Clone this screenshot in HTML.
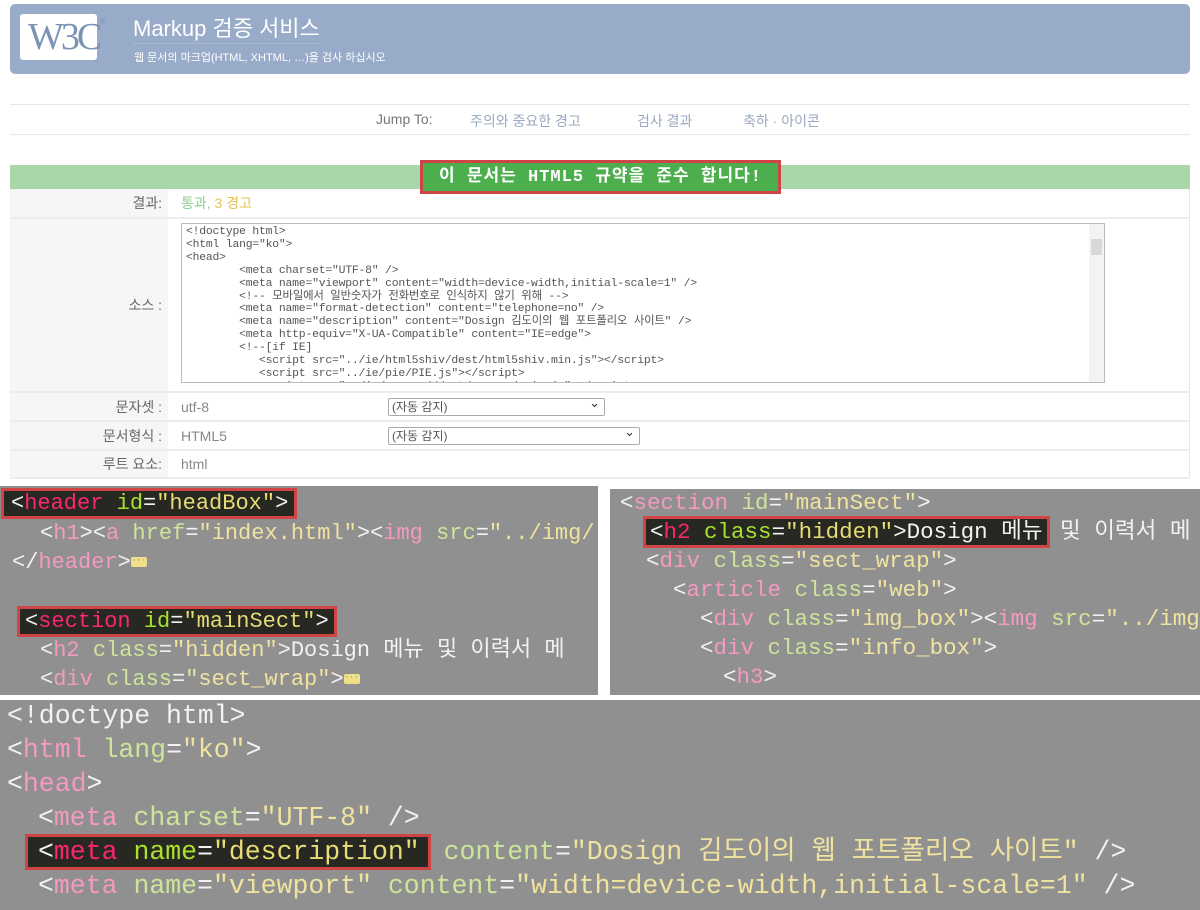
<!DOCTYPE html>
<html><head><meta charset="utf-8">
<style>
*{margin:0;padding:0;box-sizing:border-box}
body{width:1200px;height:910px;background:#fff;position:relative;overflow:hidden;font-family:"Liberation Sans","Noto Sans CJK KR",sans-serif}
.abs{position:absolute}
#hdr{left:10px;top:4px;width:1180px;height:70px;background:#98abc8;border-radius:5px}
#logo{left:20px;top:14px;width:77px;height:46px;background:#fff;border-radius:3px;color:#7d93b6;font-family:"Liberation Serif",serif;font-size:38px;letter-spacing:-3px;line-height:46px;padding-left:8px}
#logo sup{font-size:9px;vertical-align:top;line-height:14px;letter-spacing:0}
#t1{left:133px;top:15px;color:#fff;font-size:22px;border-bottom:1px solid #aab9d2;line-height:28px}
#t2{left:134px;top:49px;color:#fff;font-size:11px}
.hl{height:1px;background:#e8e8e8;left:10px;width:1180px}
.jt{top:111px;font-size:14px;color:#9aa9bf}
#green{left:10px;top:165px;width:1180px;height:24px;background:#a9d7a9}
#okbox{left:420px;top:160px;width:361px;height:34px;border:3px solid #cf4444;background:#4cae4c;color:#fff;font-family:"Liberation Mono","Noto Sans CJK KR",monospace;font-size:17px;line-height:30px;text-align:center;letter-spacing:1px;white-space:nowrap;font-weight:bold}
table{position:absolute;left:10px;top:189px;width:1180px;border-collapse:collapse;border-right:1px solid #e6e6e6}
td{border-bottom:2px solid #ececec;font-size:14px;color:#888}
td.l{width:158px;background:#f6f6f6;text-align:right;padding-right:6px;color:#666}
td.v{padding-left:13px}
#ta{position:relative;margin:4px 0 8px 0;left:0;width:924px;height:160px;border:1px solid #bbb;overflow:hidden;background:#fff}
#ta pre{font-family:"Liberation Mono","Noto Sans CJK KR",monospace;font-size:11.4px;line-height:12.9px;color:#555;padding:2px 4px;letter-spacing:-0.2px}
#sb{position:absolute;right:0;top:0;width:15px;height:158px;background:#f3f3f3}
.sel{display:inline-block;border:1px solid #aaa;border-radius:2px;height:18px;font-size:12px;color:#555;line-height:16px;padding-left:3px;position:relative}
.sel:after{content:"⌄";position:absolute;right:4px;top:-4px;font-size:13px;color:#333}
.code{background:#909090;font-family:"Liberation Mono","Noto Sans CJK KR",monospace;overflow:hidden;white-space:pre;color:#f2f2f2}
.ln{position:absolute;white-space:pre;line-height:28px;height:28px}
.c3 .ln{line-height:32px;height:32px}
.t{color:#f49ac0}.a{color:#cde59a}.s{color:#f0e3a0}
.bx{background:#272822;outline:3px solid #cf4444;outline-offset:0}
.bx .t{color:#f92672}.bx .a{color:#a6e22e}.bx .s{color:#e6db74}
.dots{display:inline-block;background:#f0e08a;border-radius:2px;width:16px;height:10px;vertical-align:middle;color:#888;font-size:8px;line-height:8px;text-align:center}
</style></head><body>
<div id="hdr" class="abs"></div>
<div id="logo" class="abs">W3C<sup>®</sup></div>
<div id="t1" class="abs">Markup 검증 서비스</div>
<div id="t2" class="abs">웹 문서의 마크업(HTML, XHTML, …)을 검사 하십시오</div>
<div class="abs hl" style="top:104px"></div>
<div class="abs hl" style="top:134px"></div>
<div class="abs jt" style="left:376px;color:#777">Jump To:</div>
<div class="abs jt" style="left:470px">주의와 중요한 경고</div>
<div class="abs jt" style="left:637px">검사 결과</div>
<div class="abs jt" style="left:743px">축하 · 아이콘</div>
<div id="green" class="abs"></div>
<div id="okbox" class="abs">이 문서는 HTML5 규약을 준수 합니다!</div>
<table>
<tr style="height:29px"><td class="l">결과:</td><td class="v" colspan="2"><span style="color:#8fcf8f">통과,</span> <span style="color:#e4c24a">3 경고</span></td></tr>
<tr style="height:174px"><td class="l">소스 :</td><td class="v" colspan="2" style="padding-left:13px"><div id="ta"><pre>&lt;!doctype html&gt;
&lt;html lang="ko"&gt;
&lt;head&gt;
        &lt;meta charset="UTF-8" /&gt;
        &lt;meta name="viewport" content="width=device-width,initial-scale=1" /&gt;
        &lt;!-- 모바일에서 일반숫자가 전화번호로 인식하지 않기 위해 --&gt;
        &lt;meta name="format-detection" content="telephone=no" /&gt;
        &lt;meta name="description" content="Dosign 김도이의 웹 포트폴리오 사이트" /&gt;
        &lt;meta http-equiv="X-UA-Compatible" content="IE=edge"&gt;
        &lt;!--[if IE]
           &lt;script src="../ie/html5shiv/dest/html5shiv.min.js"&gt;&lt;/script&gt;
           &lt;script src="../ie/pie/PIE.js"&gt;&lt;/script&gt;
           &lt;script src="../ie/respond/dest/respond.min.js"&gt;&lt;/script&gt;</pre><div id="sb"><div style="position:absolute;top:15px;left:2px;width:11px;height:16px;background:#d8d8d8"></div></div></div></td></tr>
<tr style="height:29px"><td class="l">문자셋 :</td><td class="v" style="width:207px">utf-8</td><td style="padding-left:13px"><span class="sel" style="width:217px">(자동 감지)</span></td></tr>
<tr style="height:29px"><td class="l">문서형식 :</td><td class="v">HTML5</td><td style="padding-left:13px"><span class="sel" style="width:252px">(자동 감지)</span></td></tr>
<tr style="height:28px"><td class="l">루트 요소:</td><td class="v" colspan="2">html</td></tr>
</table>

<div class="abs code" style="left:0;top:486px;width:598px;height:209px;font-size:22px">
<div class="ln" style="left:4px;top:4px"><span class="bx" style="padding:0 6px 0 7px">&lt;<span class="t">header</span> <span class="a">id</span>=<span class="s">"headBox"</span>&gt;</span></div>
<div class="ln" style="left:40px;top:34px">&lt;<span class="t">h1</span>&gt;&lt;<span class="t">a</span> <span class="a">href</span>=<span class="s">"index.html"</span>&gt;&lt;<span class="t">img</span> <span class="a">src</span>=<span class="s">"../img/</span></div>
<div class="ln" style="left:12px;top:63px">&lt;/<span class="t">header</span>&gt;<span class="dots">···</span></div>
<div class="ln" style="left:20px;top:122px"><span class="bx" style="padding:0 5px">&lt;<span class="t">section</span> <span class="a">id</span>=<span class="s">"mainSect"</span>&gt;</span></div>
<div class="ln" style="left:40px;top:151px">&lt;<span class="t">h2</span> <span class="a">class</span>=<span class="s">"hidden"</span>&gt;Dosign 메뉴 및 이력서 메</div>
<div class="ln" style="left:40px;top:180px">&lt;<span class="t">div</span> <span class="a">class</span>=<span class="s">"sect_wrap"</span>&gt;<span class="dots">···</span></div>
</div>

<div class="abs code" style="left:610px;top:489px;width:590px;height:206px;font-size:22.5px">
<div class="ln" style="left:10px;top:0px">&lt;<span class="t">section</span> <span class="a">id</span>=<span class="s">"mainSect"</span>&gt;</div>
<div class="ln" style="left:36px;top:29px"><span class="bx" style="padding:0 4px">&lt;<span class="t">h2</span> <span class="a">class</span>=<span class="s">"hidden"</span>&gt;Dosign 메뉴</span> 및 이력서 메</div>
<div class="ln" style="left:36px;top:58px">&lt;<span class="t">div</span> <span class="a">class</span>=<span class="s">"sect_wrap"</span>&gt;</div>
<div class="ln" style="left:63px;top:87px">&lt;<span class="t">article</span> <span class="a">class</span>=<span class="s">"web"</span>&gt;</div>
<div class="ln" style="left:90px;top:116px">&lt;<span class="t">div</span> <span class="a">class</span>=<span class="s">"img_box"</span>&gt;&lt;<span class="t">img</span> <span class="a">src</span>=<span class="s">"../img</span></div>
<div class="ln" style="left:90px;top:145px">&lt;<span class="t">div</span> <span class="a">class</span>=<span class="s">"info_box"</span>&gt;</div>
<div class="ln" style="left:113px;top:174px">&lt;<span class="t">h3</span>&gt;</div>
</div>

<div class="abs code c3" style="left:0;top:700px;width:1200px;height:210px;font-size:26.5px">
<div class="ln" style="left:7px;top:0px">&lt;!doctype html&gt;</div>
<div class="ln" style="left:7px;top:34px">&lt;<span class="t">html</span> <span class="a">lang</span>=<span class="s">"ko"</span>&gt;</div>
<div class="ln" style="left:7px;top:68px">&lt;<span class="t">head</span>&gt;</div>
<div class="ln" style="left:38px;top:102px">&lt;<span class="t">meta</span> <span class="a">charset</span>=<span class="s">"UTF-8"</span> /&gt;</div>
<div class="ln" style="left:28px;top:136px"><span class="bx" style="padding:0 8px 0 10px">&lt;<span class="t">meta</span> <span class="a">name</span>=<span class="s">"description"</span></span> <span class="a">content</span>=<span class="s">"Dosign 김도이의 웹 포트폴리오 사이트"</span> /&gt;</div>
<div class="ln" style="left:38px;top:170px">&lt;<span class="t">meta</span> <span class="a">name</span>=<span class="s">"viewport"</span> <span class="a">content</span>=<span class="s">"width=device-width,initial-scale=1"</span> /&gt;</div>
</div>
</body></html>
